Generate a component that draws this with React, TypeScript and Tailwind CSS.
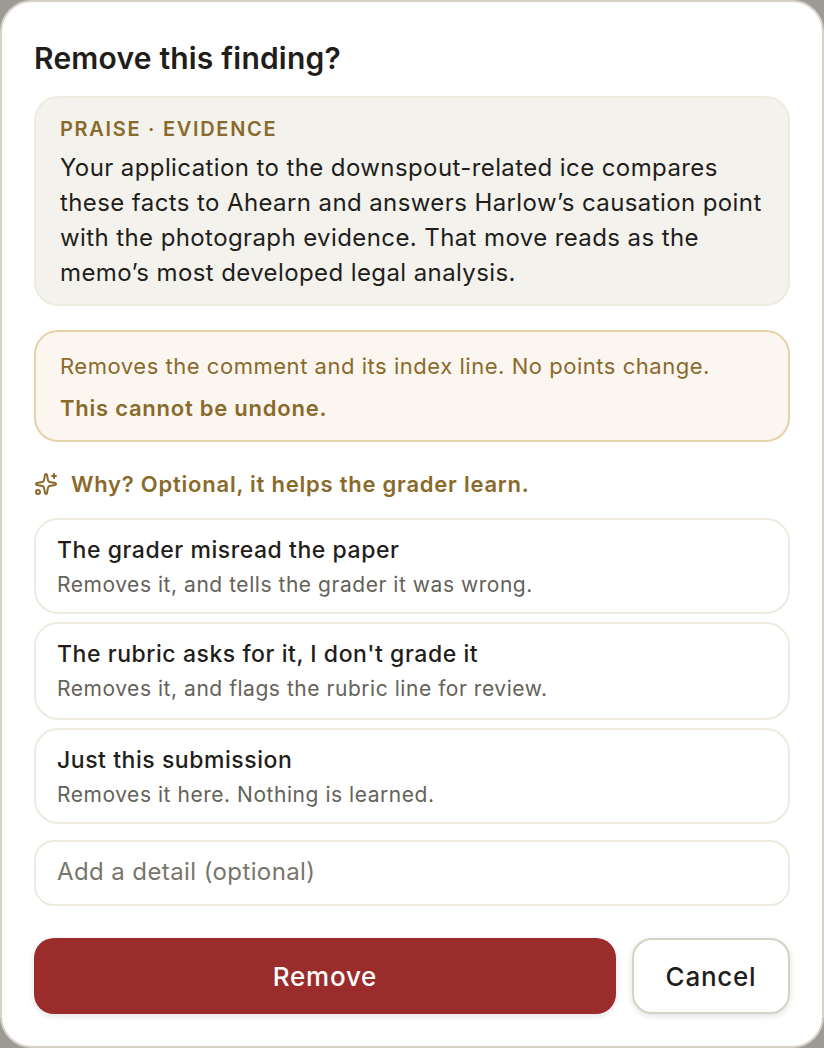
import { Sparkles } from 'lucide-react';

const options = [
  { title: 'The grader misread the paper', hint: 'Removes it, and tells the grader it was wrong.', height: 'h-[96px]' },
  { title: "The rubric asks for it, I don't grade it", hint: 'Removes it, and flags the rubric line for review.', height: 'h-[98px]' },
  { title: 'Just this submission', hint: 'Removes it here. Nothing is learned.', height: 'h-[96px]' },
];

export default function App() {
  return (
    <div className="h-[1048px] w-[824px] bg-[#9b9a94] font-['Inter','Liberation_Sans',sans-serif]">
      <div className="flex h-full flex-col rounded-[32px] border-2 border-[#d6d2c6] bg-white px-[32px] pt-[38px] text-[#1f1e1b]">
        <h2 className="text-[30px] leading-[36px] font-semibold tracking-[0.2px]">Remove this finding?</h2>

        {/* Finding */}
        <div className="mt-[20px] h-[210px] rounded-[24px] border-2 border-[#eeebe1] bg-[#f3f2ed] px-[24px] pt-[19px]">
          <div className="text-[20px] leading-[24px] font-semibold tracking-[1.7px] text-[#8a6a2b]">PRAISE · EVIDENCE</div>
          <p className="mt-[9px] text-[24px] leading-[35px] tracking-[0.4px]">
            Your application to the downspout-related ice compares these facts to Ahearn and answers Harlow’s causation point with the photograph evidence. That move reads as the memo’s most developed legal analysis.
          </p>
        </div>

        {/* Warning */}
        <div className="mt-[24px] h-[112px] rounded-[24px] border-2 border-[#e6d3a8] bg-[#fbf6f0] px-[24px] pt-[17px] text-[22px] leading-[34px] tracking-[0.53px] text-[#8a6a2b]">
          <p>Removes the comment and its index line. No points change.</p>
          <p className="mt-[8px] font-semibold tracking-[0.76px]">This cannot be undone.</p>
        </div>

        <div className="mt-[27px] flex items-center gap-[13px] text-[22px] leading-[30px] font-semibold tracking-[0.77px] text-[#8a6a2b]">
          <Sparkles className="h-[24px] w-[24px]" strokeWidth={2} />
          <span>Why? Optional, it helps the grader learn.</span>
        </div>

        {/* Reasons */}
        <div className="mt-[19px] flex flex-col gap-[8px]">
          {options.map((o) => (
            <div key={o.title} className={`${o.height} rounded-[24px] border-2 border-[#eeeadf] bg-white px-[21px] pt-[14px]`}>
              <div className="text-[23px] leading-[32px] font-medium tracking-[0.55px]">{o.title}</div>
              <div className="mt-[4px] text-[21px] leading-[30px] tracking-[0.54px] text-[#64625a]">{o.hint}</div>
            </div>
          ))}
        </div>

        <input
          placeholder="Add a detail (optional)"
          className="mt-[16px] h-[66px] rounded-[20px] border-2 border-[#eeeadf] bg-white px-[21px] pb-[3px] text-[24px] tracking-[0.4px] outline-none placeholder:text-[#77756c]"
        />

        <div className="mt-[32px] flex gap-[16px]">
          <button className="h-[76px] flex-1 rounded-[20px] bg-[#9b2c2c] text-[26px] font-medium tracking-[0.75px] text-white shadow-[0_2px_6px_rgba(0,0,0,0.12)]">
            Remove
          </button>
          <button className="h-[76px] w-[158px] rounded-[20px] border-2 border-[#d6d2c6] bg-white text-[26px] font-medium tracking-[0.75px] text-[#1f1e1b] shadow-[0_2px_6px_rgba(0,0,0,0.12)]">
            Cancel
          </button>
        </div>
      </div>
    </div>
  );
}
